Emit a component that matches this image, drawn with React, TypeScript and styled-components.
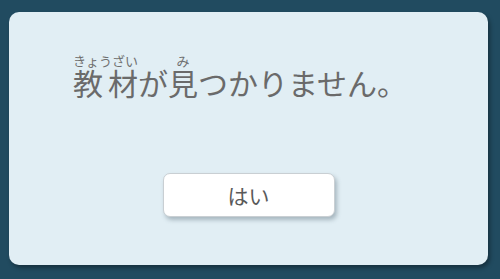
import * as React from "react";
import styled, { createGlobalStyle } from "styled-components";

const GlobalStyle = createGlobalStyle`
  html, body {
    margin: 0;
    padding: 0;
    background: #214b60;
    font-family: "Noto Sans CJK JP", "Noto Sans", sans-serif;
  }
`;

const Screen = styled.div`
  width: 500px;
  height: 279px;
  box-sizing: border-box;
  padding: 12px 12px 14px 9px;
  display: flex;
`;

const Dialog = styled.section`
  flex: 1;
  background: #e1eef4;
  border-radius: 10px;
  box-shadow: 2px 3px 4px rgba(0, 0, 0, 0.35);
  display: flex;
  flex-direction: column;
  align-items: center;
`;

const Message = styled.p`
  margin: 42px 0 0 0;
  align-self: flex-start;
  padding-left: 64px;
  font-size: 30px;
  line-height: 36px;
  color: #6a6a6a;

  ruby {
    ruby-align: space-between;
  }
  rt {
    font-size: 13px;
    line-height: 12px;
    color: #707070;
  }
`;

const Button = styled.button`
  margin-top: 73px;
  width: 172px;
  height: 44px;
  background: #ffffff;
  border: 1px solid #c9cfd3;
  border-radius: 7px;
  box-shadow: 2px 3px 4px rgba(60, 80, 95, 0.35);
  font-family: inherit;
  font-size: 21px;
  color: #5a5a5a;
  cursor: pointer;
`;

const App: React.FunctionComponent = () => {
  return (
    <Screen>
      <GlobalStyle />
      <Dialog>
        <Message>
          <ruby>教材<rt>きょうざい</rt></ruby>が<ruby>見<rt>み</rt></ruby>つかりません。
        </Message>
        <Button>はい</Button>
      </Dialog>
    </Screen>
  );
};

export default App;
